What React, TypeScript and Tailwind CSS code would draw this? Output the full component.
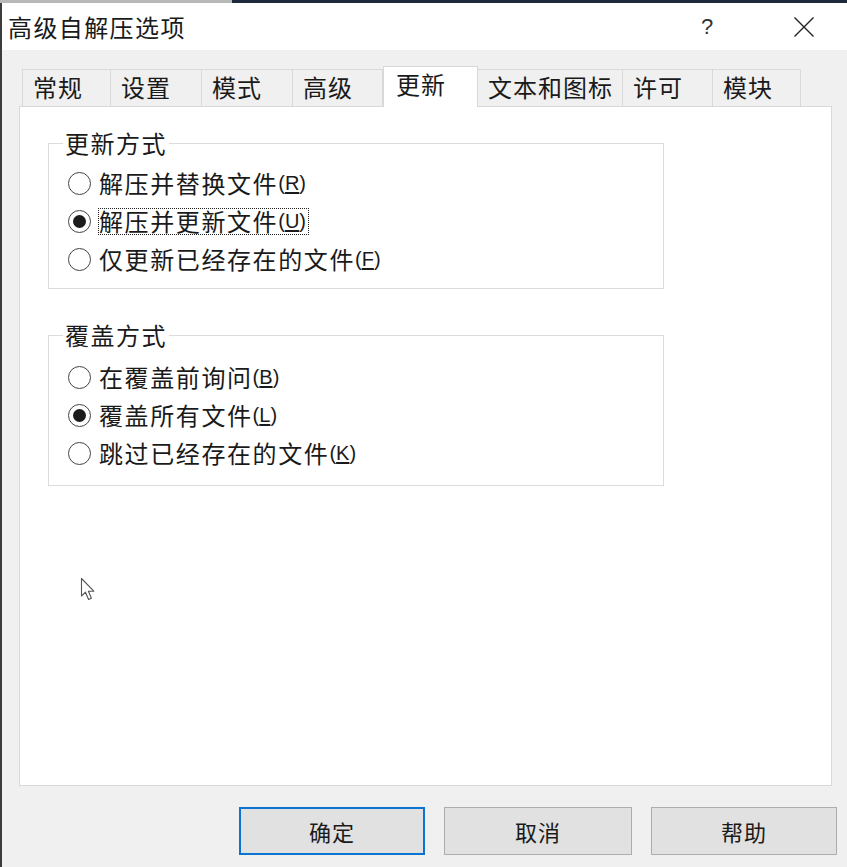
import React from "react";
import clsx from "clsx";

const tabs = [
  { label: "常规", w: "w-[89px]" },
  { label: "设置", w: "w-[91px]" },
  { label: "模式", w: "w-[91px]" },
  { label: "高级", w: "w-[90px]" },
  { label: "更新", w: "w-[95px]", active: true },
  { label: "文本和图标", w: "w-[145px]" },
  { label: "许可", w: "w-[90px]" },
  { label: "模块", w: "w-[88px]" },
];

const Radio = ({ checked }: { checked?: boolean }) => (
  <span className="w-[23px] h-[23px] rounded-full border border-[#444] bg-white flex items-center justify-center shrink-0">
    {checked && <span className="w-[13px] h-[13px] rounded-full bg-[#1c1c1c]" />}
  </span>
);

const Option = ({
  label,
  hotkey,
  checked,
  focused,
}: {
  label: string;
  hotkey: string;
  checked?: boolean;
  focused?: boolean;
}) => (
  <div className="flex items-center h-[38px] pl-[5px]">
    <Radio checked={checked} />
    <span
      className={clsx(
        "ml-[7px] flex items-center h-[27px] pr-[2px] border",
        focused ? "border-dotted border-[#222]" : "border-transparent"
      )}
    >
      <span className="text-[24px] leading-none tracking-[1.6px]">{label}</span>
      <span className="[font-family:'Liberation_Sans',sans-serif] text-[20px] leading-none">
        (<span className="underline underline-offset-2">{hotkey}</span>)
      </span>
    </span>
  </div>
);

const Group = ({
  title,
  children,
  className,
  bodyClass,
}: {
  title: string;
  children: React.ReactNode;
  className?: string;
  bodyClass?: string;
}) => (
  <fieldset className={clsx("border border-[#dcdcdc] w-[616px] pl-[14px]", className)}>
    <legend className="px-[2px] text-[24px] leading-[26px] tracking-[1.5px]">{title}</legend>
    <div className={bodyClass}>{children}</div>
  </fieldset>
);

const Cursor = () => (
  <svg className="absolute left-[80px] top-[577px]" width="16" height="26" viewBox="0 0 16 26">
    <path
      d="M1.5 1.5 L1.5 19 L5.5 15.2 L8.6 22.5 L11.4 21.3 L8.4 14.2 L13.8 14.2 Z"
      fill="#fff"
      stroke="#555"
      strokeWidth="1.1"
      strokeLinejoin="round"
    />
  </svg>
);

export default function App() {
  return (
    <div className="relative w-[847px] h-[867px] overflow-hidden bg-[#f0f0f0] text-[#1a1a1a] [font-family:'Noto_Sans_CJK_SC','Liberation_Sans',sans-serif]">
      <div className="flex h-[3px]">
        <div className="w-[232px] bg-[#b8b8b8]" />
        <div className="flex-1 bg-[#1d2a3c]" />
      </div>
      <div className="border-l-2 border-[#3c3c3c] h-[864px] flex flex-col">
        {/* title bar */}
        <div className="h-[47px] bg-white flex items-center">
          <span className="pl-[6px] text-[24px] leading-none tracking-[1.4px]">高级自解压选项</span>
          <span className="ml-auto w-[40px] text-center text-[22px] leading-none [font-family:'Liberation_Sans',sans-serif] text-[#333]">
            ?
          </span>
          <span className="ml-[57px] mr-[23px] w-[40px] flex justify-center">
            <svg width="22" height="22" viewBox="0 0 22 22">
              <path d="M1.5 1.5 L20.5 20.5 M20.5 1.5 L1.5 20.5" stroke="#222" strokeWidth="1.4" />
            </svg>
          </span>
        </div>

        {/* tabs */}
        <div className="flex items-end pl-[20px] mt-[16px] h-[40px] relative z-10">
          {tabs.map((t) =>
            t.active ? (
              <div
                key={t.label}
                className={clsx(
                  t.w,
                  "h-[41px] -mb-px bg-white border border-b-0 border-[#d9d9d9] pl-[12px] pt-[2px] text-[24px] leading-[30px] tracking-[1px]"
                )}
              >
                {t.label}
              </div>
            ) : (
              <div
                key={t.label}
                className={clsx(
                  t.w,
                  "h-[37px] border-t border-r border-[#d9d9d9] first:border-l bg-[#f0f0f0] pl-[10px] pt-[2px] text-[24px] leading-[30px] tracking-[1px] whitespace-nowrap overflow-hidden"
                )}
              >
                {t.label}
              </div>
            )
          )}
        </div>

        {/* panel */}
        <div className="ml-[17px] w-[813px] h-[680px] bg-white border border-[#d9d9d9] pl-[28px] pt-[23px]">
          <Group title="更新方式" bodyClass="mt-[8px] pb-[10px]">
            <Option label="解压并替换文件" hotkey="R" />
            <Option label="解压并更新文件" hotkey="U" checked focused />
            <Option label="仅更新已经存在的文件" hotkey="F" />
          </Group>
          <Group title="覆盖方式" className="mt-[33px]" bodyClass="mt-[10px] pb-[13px]">
            <Option label="在覆盖前询问" hotkey="B" />
            <Option label="覆盖所有文件" hotkey="L" checked />
            <Option label="跳过已经存在的文件" hotkey="K" />
          </Group>
        </div>

        {/* buttons */}
        <div className="flex justify-end gap-[19px] pr-[10px] mt-[21px]">
          <button className="w-[186px] h-[48px] bg-[#e1e1e1] border-2 border-[#0a74d0] text-[22px] tracking-[1px]">
            确定
          </button>
          <button className="w-[188px] h-[48px] bg-[#e1e1e1] border border-[#adadad] text-[22px] tracking-[1px]">
            取消
          </button>
          <button className="w-[186px] h-[48px] bg-[#e1e1e1] border border-[#adadad] text-[22px] tracking-[1px]">
            帮助
          </button>
        </div>
      </div>
      <Cursor />
    </div>
  );
}
